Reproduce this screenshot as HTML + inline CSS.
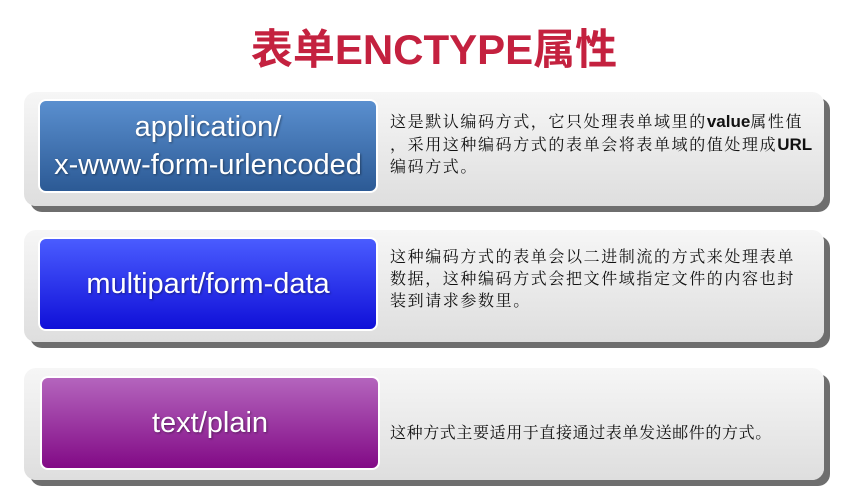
<!DOCTYPE html><html><head><meta charset="utf-8"><style>
body{margin:0;width:868px;height:486px;background:#fff;overflow:hidden;position:relative;font-family:"Liberation Sans","Noto Sans CJK SC",sans-serif}
.t{position:absolute;left:0;width:868px;top:20px;text-align:center;font-size:42px;font-weight:bold;color:#c4213f;line-height:60px}
.p{position:absolute;left:24px;width:800px;border-radius:12px;background:linear-gradient(#f6f6f6,#dedede);box-shadow:6px 6px 0 #6e6e6e}
.b{position:absolute;left:14px;width:340px;border-radius:8px;color:#fff;text-align:center;display:flex;align-items:center;justify-content:center;border:2px solid #fff;box-sizing:border-box;text-shadow:1px 1px 2px rgba(0,0,0,.4)}
.d{position:absolute;left:366px;font-family:"Liberation Serif","Noto Serif CJK SC",serif;font-size:16px;letter-spacing:1.6px;line-height:22px;color:#111;white-space:nowrap}
.d b{font-family:"Liberation Sans",sans-serif;letter-spacing:0;font-size:17px}
</style></head><body>
<div class="t">表单ENCTYPE属性</div>
<div class="p" style="top:92px;height:114px">
<div class="b" style="top:7px;height:94px;background:linear-gradient(#5a8fcf,#2c5a95);font-size:29px;line-height:38px">application/<br>x-www-form-urlencoded</div>
<div class="d" style="top:19px">这是默认编码方式，它只处理表单域里的<b>value</b>属性值<br>，采用这种编码方式的表单会将表单域的值处理成<b>URL</b><br>编码方式。</div>
</div>
<div class="p" style="top:230px;height:112px">
<div class="b" style="top:7px;height:94px;background:linear-gradient(#4a5cff,#1010d8);font-size:29px">multipart/form-data</div>
<div class="d" style="top:17px">这种编码方式的表单会以二进制流的方式来处理表单<br>数据，这种编码方式会把文件域指定文件的内容也封<br>装到请求参数里。</div>
</div>
<div class="p" style="top:368px;height:112px">
<div class="b" style="top:8px;height:94px;left:16px;background:linear-gradient(#b465bd,#820a86);font-size:29px">text/plain</div>
<div class="d" style="top:55px;letter-spacing:0.6px">这种方式主要适用于直接通过表单发送邮件的方式。</div>
</div>
</body></html>
